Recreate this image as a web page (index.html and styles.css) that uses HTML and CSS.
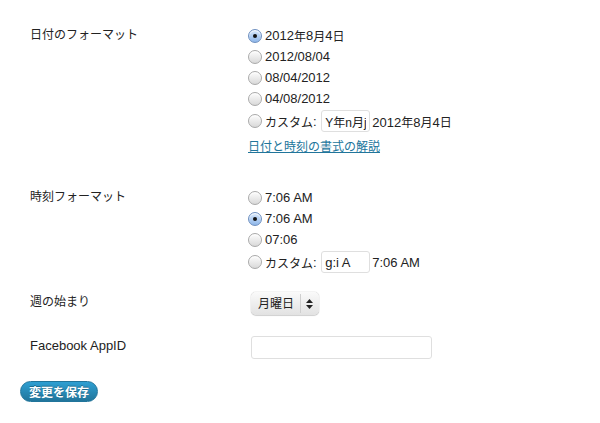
FILE: index.html
```html
<!DOCTYPE html>
<html lang="ja">
<head>
    <meta charset="UTF-8">
    <title>一般設定</title>
    <link rel="stylesheet" href="styles.css">
</head>
<body>
    <form class="settings">
        <div class="row row-date">
            <div class="label"><span class="ja">日付のフォーマット</span></div>
            <div class="field">
                <label class="opt"><input type="radio" name="date_format" checked>2012<span class="ja">年</span>8<span class="ja">月</span>4<span class="ja">日</span></label>
                <label class="opt"><input type="radio" name="date_format">2012/08/04</label>
                <label class="opt"><input type="radio" name="date_format">08/04/2012</label>
                <label class="opt"><input type="radio" name="date_format">04/08/2012</label>
                <label class="opt opt-custom"><input type="radio" name="date_format"><span class="ja">カスタム</span>: <input type="text" class="small-text small-ja" value="Y年n月j"> <span class="example">2012<span class="ja">年</span>8<span class="ja">月</span>4<span class="ja">日</span></span></label>
                <p class="doc"><a href="#" class="ja">日付と時刻の書式の解説</a></p>
            </div>
        </div>

        <div class="row row-time">
            <div class="label"><span class="ja">時刻フォーマット</span></div>
            <div class="field">
                <label class="opt"><input type="radio" name="time_format">7:06 AM</label>
                <label class="opt"><input type="radio" name="time_format" checked>7:06 AM</label>
                <label class="opt"><input type="radio" name="time_format">07:06</label>
                <label class="opt opt-custom"><input type="radio" name="time_format"><span class="ja">カスタム</span>: <input type="text" class="small-text" value="g:i A"> <span class="example">7:06 AM</span></label>
            </div>
        </div>

        <div class="row row-week">
            <div class="label"><span class="ja">週の始まり</span></div>
            <div class="field">
                <span class="select-wrap">
                    <select class="week">
                        <option>日曜日</option>
                        <option selected>月曜日</option>
                        <option>火曜日</option>
                        <option>水曜日</option>
                        <option>木曜日</option>
                        <option>金曜日</option>
                        <option>土曜日</option>
                    </select>
                    <span class="arrows">
                        <svg width="7" height="10" viewBox="0 0 7 10"><path d="M3.5 0 L7 4 L0 4 Z M0 6 L7 6 L3.5 10 Z" fill="#222"/></svg>
                    </span>
                </span>
            </div>
        </div>

        <div class="row row-fb">
            <div class="label">Facebook AppID</div>
            <div class="field">
                <input type="text" class="regular-text">
            </div>
        </div>

        <p class="submit"><button type="submit" class="button-primary">変更を保存</button></p>
    </form>
</body>
</html>
```

FILE: styles.css
```css
body { margin: 0; background: #fff; color: #333; font-family: "Liberation Sans", "Noto Sans CJK JP", sans-serif; font-size: 13px; }
.ja { font-size: 12px; }
.settings { padding: 25px 0 0 0; }
.row { display: flex; }
.label { width: 218px; padding-left: 30px; line-height: 19px; color: #222; }
.field { display: flex; flex-direction: column; align-items: flex-start; }
.opt { display: flex; align-items: center; height: 21px; white-space: pre; color: #222; }
.opt-custom { height: 24px; }

input[type=radio] { appearance: none; -webkit-appearance: none; width: 14px; height: 14px; margin: 0 3px 0 0; border: 1px solid #a9a9a9; border-radius: 50%; background: linear-gradient(#fdfdfd, #d9d9d9); box-shadow: inset 0 1px 1px #fff; position: relative; }
input[type=radio]:checked { background: linear-gradient(#d8e8fb, #8fb7ea); border-color: #6d8fc0; }
input[type=radio]:checked::after { content: ""; position: absolute; left: 4px; top: 4px; width: 4px; height: 4px; border-radius: 50%; background: #111; }

.small-text { width: 49px; height: 22px; box-sizing: border-box; padding: 0 3px; border: 1px solid #dfdfdf; border-radius: 3px; font: inherit; color: #222; margin: 0 2px 0 1px; }
.small-ja { font-size: 12px; }

.doc { margin: 5px 0 0 0; line-height: 18px; }
.doc a { color: #21759b; }

.row-time { margin-top: 31px; }
.row-week { margin-top: 18px; }
.select-wrap { display: flex; align-items: stretch; height: 23px; margin-left: 3px; border-radius: 5px; background: linear-gradient(#fafafa, #e2e2e2); box-shadow: 0 0 1px rgba(0,0,0,0.45), 0 1px 1px rgba(0,0,0,0.15); }
.week { appearance: none; -webkit-appearance: none; border: none; background: transparent; font: 12px "Liberation Sans", "Noto Sans CJK JP", sans-serif; color: #222; padding: 0 5px 0 7px; }
.arrows { display: flex; align-items: center; padding: 0 6px 0 5px; border-left: 1px solid #cfcfcf; margin: 2px 0; }

.row-fb { margin-top: 21px; }
.regular-text { width: 181px; height: 23px; box-sizing: border-box; margin-left: 3px; border: 1px solid #dfdfdf; border-radius: 3px; font: inherit; }

.submit { margin: 22px 0 0 20px; }
.button-primary { height: 21px; width: 78px; padding: 0; border: 1px solid #21759b; border-radius: 11px; background: linear-gradient(#2e9fd2, #21759b); color: #fff; font: bold 12px "Liberation Sans", "Noto Sans CJK JP", sans-serif; text-shadow: 0 -1px 0 rgba(0,0,0,0.3); cursor: pointer; }
```
